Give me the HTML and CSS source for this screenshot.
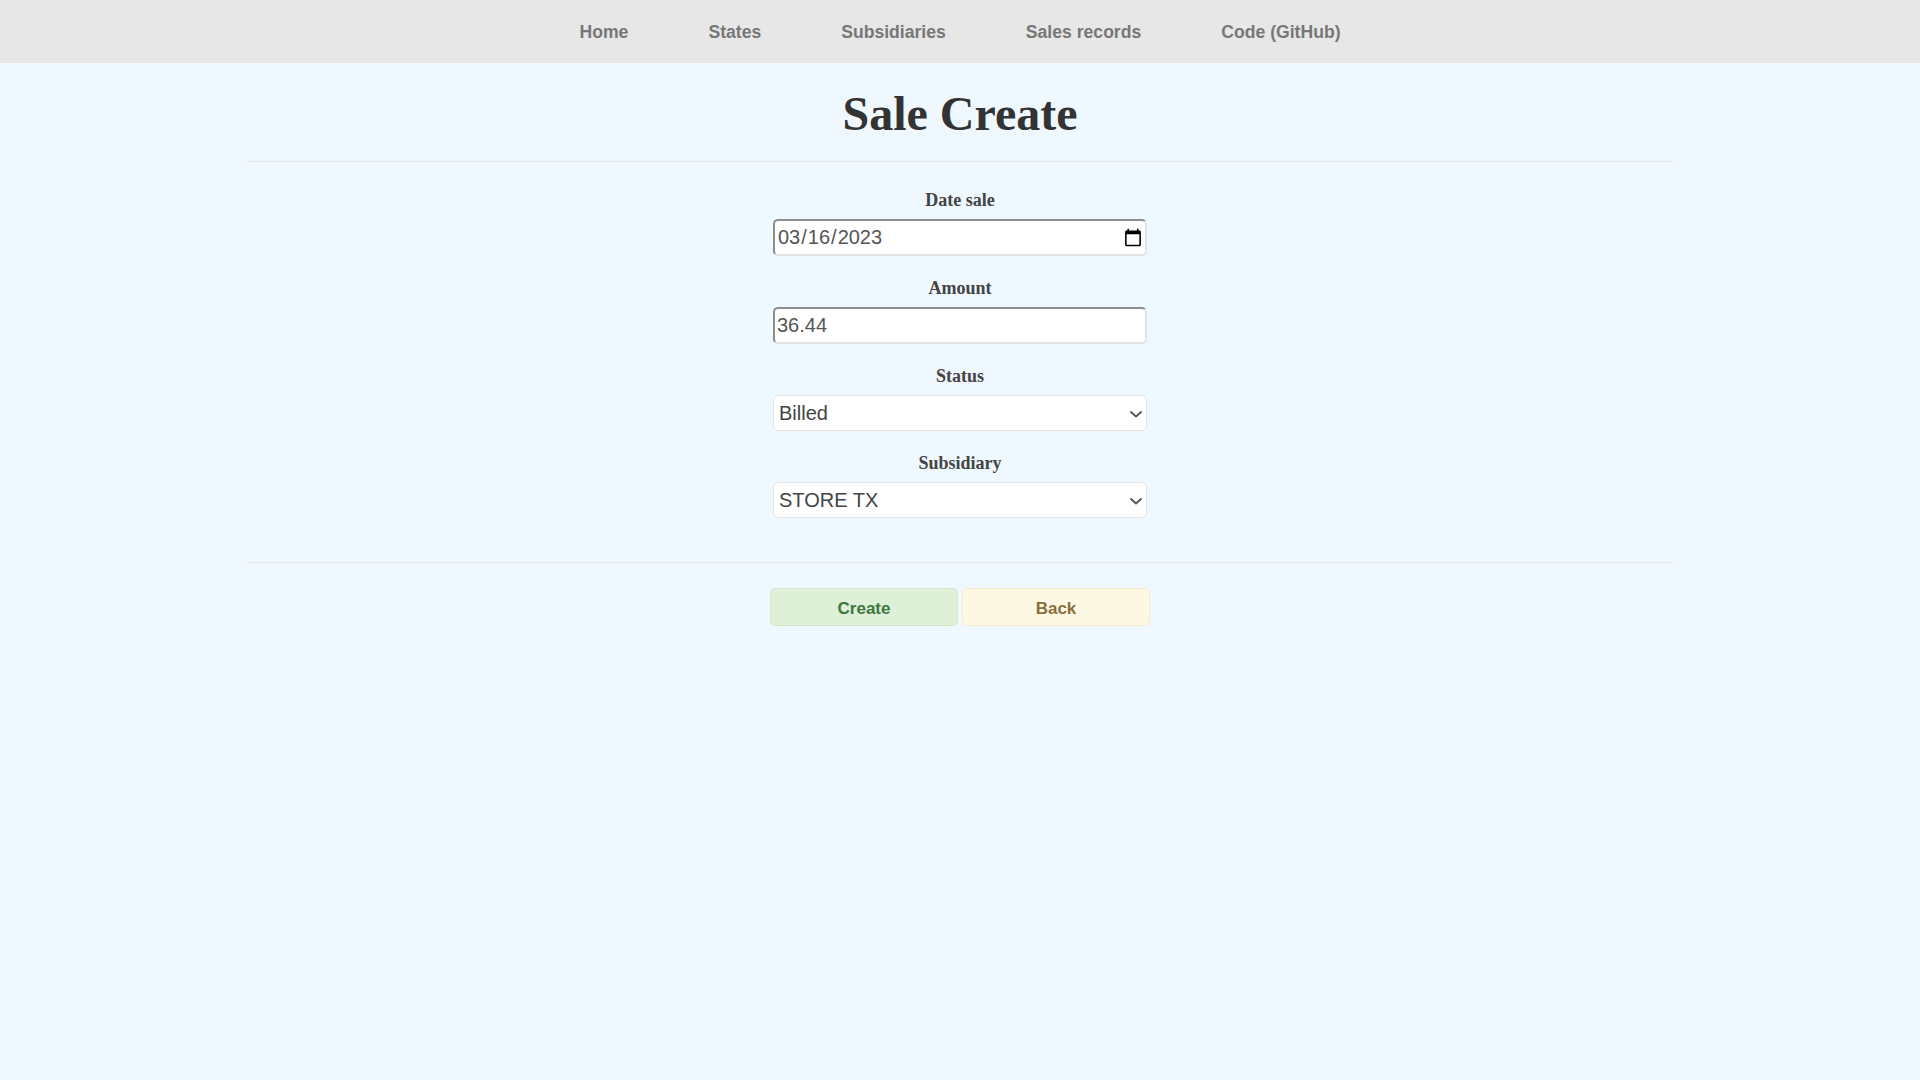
FILE: index.html
```html
<!DOCTYPE html>
<html lang="en">
<head>
<meta charset="utf-8">
<title>Sale Create</title>
<link rel="stylesheet" href="styles.css">
</head>
<body>
<nav class="topnav">
  <a class="navlink" href="#">Home</a>
  <a class="navlink" href="#">States</a>
  <a class="navlink" href="#">Subsidiaries</a>
  <a class="navlink" href="#">Sales records</a>
  <a class="navlink" href="#">Code (GitHub)</a>
</nav>
<main class="container">
  <h1 class="title">Sale Create</h1>
  <hr class="rule">
  <form class="form">
    <div class="field">
      <label class="label" for="date">Date sale</label>
      <input class="input input-date" id="date" type="date" value="2023-03-16">
    </div>
    <div class="field">
      <label class="label" for="amount">Amount</label>
      <input class="input" id="amount" type="text" value="36.44">
    </div>
    <div class="field">
      <label class="label" for="status">Status</label>
      <div class="select-wrap">
        <select class="select" id="status">
          <option>Billed</option>
          <option>Pending</option>
        </select>
        <svg class="chevron" width="12" height="7" viewBox="0 0 12 7" aria-hidden="true"><path d="M1 1l5 4.5L11 1" fill="none" stroke="#505050" stroke-width="1.8" stroke-linecap="round" stroke-linejoin="round"/></svg>
      </div>
    </div>
    <div class="field">
      <label class="label" for="sub">Subsidiary</label>
      <div class="select-wrap">
        <select class="select" id="sub">
          <option>STORE TX</option>
        </select>
        <svg class="chevron" width="12" height="7" viewBox="0 0 12 7" aria-hidden="true"><path d="M1 1l5 4.5L11 1" fill="none" stroke="#505050" stroke-width="1.8" stroke-linecap="round" stroke-linejoin="round"/></svg>
      </div>
    </div>
  </form>
  <hr class="rule">
  <div class="actions">
    <button class="btn btn-create" type="button">Create</button>
    <button class="btn btn-back" type="button">Back</button>
  </div>
</main>
</body>
</html>
```
FILE: styles.css
```css
html, body {
  margin: 0;
  padding: 0;
}
body {
  background: #eff7ff;
  font-family: "Liberation Sans", Arial, sans-serif;
  min-height: 1080px;
}
.topnav {
  height: 63px;
  background: #e7e7e7;
  display: flex;
  justify-content: center;
  align-items: center;
}
.navlink {
  padding: 0 40px;
  font-size: 17.6px;
  font-weight: bold;
  color: #777;
  text-decoration: none;
  line-height: 20px;
}
.container {
  width: 1424px;
  margin: 0 auto;
}
.title {
  margin: 23px 0 19px;
  text-align: center;
  font-family: "Liberation Serif", "Times New Roman", serif;
  font-weight: bold;
  font-size: 48px;
  line-height: 56px;
  color: #333;
}
.rule {
  margin: 0;
  border: 0;
  border-top: 1px solid #e3e7eb;
  height: 0;
}
.form {
  display: flex;
  flex-direction: column;
  align-items: center;
  padding: 28px 0 44px;
  gap: 22px;
}
.field {
  display: flex;
  flex-direction: column;
  align-items: center;
  gap: 9px;
}
.label {
  font-family: "Liberation Serif", "Times New Roman", serif;
  font-weight: bold;
  font-size: 18px;
  line-height: 20px;
  color: #444;
}
.input {
  box-sizing: border-box;
  width: 374px;
  height: 37px;
  margin: 0;
  padding: 1px 2px;
  font-family: "Liberation Sans", Arial, sans-serif;
  font-size: 20px;
  color: #555;
  background: #fff;
  border-width: 2px;
  border-style: solid;
  border-color: #8d8d8d #e4e4e4 #e4e4e4 #8d8d8d;
  border-radius: 5px;
}
.input-date::-webkit-calendar-picker-indicator {
  margin-right: -2px;
}
.select-wrap {
  position: relative;
  width: 374px;
  height: 36px;
}
.select {
  -webkit-appearance: none;
  appearance: none;
  box-sizing: border-box;
  display: block;
  width: 374px;
  height: 36px;
  margin: 0;
  padding: 0 24px 0 5px;
  font-family: "Liberation Sans", Arial, sans-serif;
  font-size: 20px;
  color: #444;
  background: #fff;
  border: 1px solid #e2e2e2;
  border-radius: 6px;
}
.chevron {
  position: absolute;
  right: 5px;
  top: 16px;
  pointer-events: none;
}
.actions {
  display: flex;
  justify-content: center;
  gap: 4px;
  padding-top: 25px;
}
.btn {
  box-sizing: border-box;
  width: 188px;
  height: 38px;
  margin: 0;
  padding: 3px 0 0;
  font-family: "Liberation Sans", Arial, sans-serif;
  font-weight: bold;
  font-size: 17px;
  border-radius: 5px;
  border: 1px solid;
}
.btn-create {
  background: #dff0d8;
  color: #3c763d;
  border-color: #d3e8c8;
}
.btn-back {
  background: #fcf8e3;
  color: #8a6d3b;
  border-color: #f7ebcc;
}
```
